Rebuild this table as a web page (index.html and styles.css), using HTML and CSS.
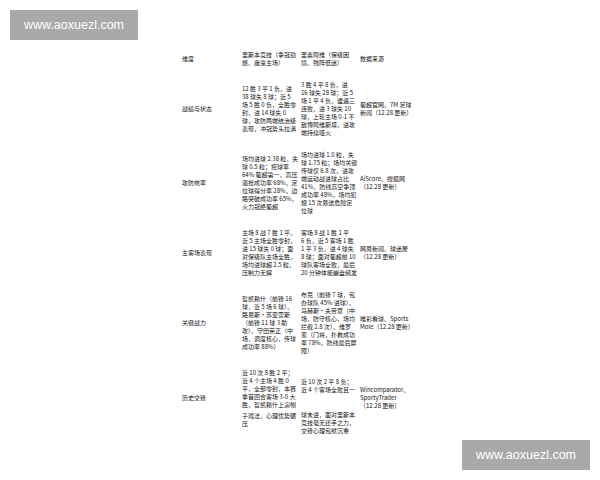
FILE: index.html
```html
<!DOCTYPE html>
<html lang="zh-CN">
<head>
<meta charset="utf-8">
<title>里斯本竞技 vs 里奥阿维</title>
<link rel="stylesheet" href="styles.css">
</head>
<body>
<div class="page">
  <table class="cmp">
    <colgroup>
      <col class="c1"><col class="c2"><col class="c3"><col class="c4">
    </colgroup>
    <tr>
      <td>维度</td>
      <td>里斯本竞技（争冠劲<br>旅、魔鬼主场）</td>
      <td>里奥阿维（保级困<br>境、残阵低迷）</td>
      <td>数据来源</td>
    </tr>
    <tr>
      <td>战绩与状态</td>
      <td>12 胜 3 平 1 负，进<br>38 球失 8 球；近 5<br>场 5 胜 0 负，全胜零<br>封，进 14 球失 0<br>球，攻防两端统治级<br>表现，冲冠势头拉满</td>
      <td>3 胜 4 平 8 负，进<br>16 球失 28 球；近 5<br>场 1 平 4 负，遭遇三<br>连败，进 3 球失 10<br>球，上轮主场 0-1 不<br>敌博阿维斯塔，进攻<br>端持续哑火</td>
      <td>葡超官网、7M 足球<br>新闻（12.28 更新）</td>
    </tr>
    <tr>
      <td>攻防效率</td>
      <td>场均进球 2.38 粒，失<br>球 0.5 粒；控球率<br>64% 葡超第一，高压<br>逼抢成功率 68%，定<br>位球得分率 28%，边<br>路突破成功率 65%，<br>火力冠绝葡超</td>
      <td>场均进球 1.0 粒，失<br>球 1.75 粒；场均关键<br>传球仅 6.8 次，进攻<br>端运动战进球占比<br>41%，防线高空争顶<br>成功率 48%，场均犯<br>规 15 次易送危险定<br>位球</td>
      <td>AiScore、搜狐网<br>（12.28 更新）</td>
    </tr>
    <tr>
      <td>主客场表现</td>
      <td>主场 8 战 7 胜 1 平，<br>近 5 主场全胜零封，<br>进 15 球失 0 球；面<br>对保级队主场全胜，<br>场均进球超 2.5 粒，<br>压制力无解</td>
      <td>客场 8 战 1 胜 1 平<br>6 负，近 5 客场 1 胜<br>1 平 3 负，进 4 球失<br>8 球；面对葡超前 10<br>球队客场全败，最后<br>20 分钟体能崩盘频发</td>
      <td>网易新闻、球迷屋<br>（12.28 更新）</td>
    </tr>
    <tr>
      <td>关键战力</td>
      <td>哲凯赖什（前锋 16<br>球，近 5 场 6 球）、<br>路易斯·苏亚雷斯<br>（前锋 11 球 3 助<br>攻）、守田英正（中<br>场，调度核心，传球<br>成功率 88%）</td>
      <td>布克（前锋 7 球，包<br>办球队 45% 进球）、<br>马赫斯·夫劳意（中<br>场，防守核心，场均<br>拦截 2.8 次）、维罗<br>索（门将，扑救成功<br>率 78%，防线最后屏<br>障）</td>
      <td>唯彩看球、Sports<br>Mole（12.28 更新）</td>
    </tr>
    <tr class="last">
      <td class="lift">历史交锋</td>
      <td class="top"><span class="part">近 10 次 8 胜 2 平；<br>近 4 个主场 4 胜 0<br>平，全部零封，本赛<br>季首回合客场 3-0 大<br>胜，哲凯赖什上演帽</span><span class="part gap-s">子戏法，心理优势碾<br>压</span></td>
      <td class="top"><span class="part drop">近 10 次 2 平 8 负；<br>近 4 个客场全败且一</span><span class="part gap-l">球未进，面对里斯本<br>竞技毫无还手之力，<br>交锋心理包袱沉重</span></td>
      <td class="lift">Wincomparator、<br>SportyTrader<br>（12.28 更新）</td>
    </tr>
  </table>
</div>
<div class="mark mark-tl">www.aoxuezl.com</div>
<div class="mark mark-br">www.aoxuezl.com</div>
</body>
</html>
```

FILE: styles.css
```css
html, body {
  margin: 0;
  padding: 0;
  background: #ffffff;
}

.page {
  width: 600px;
  height: 480px;
  overflow: hidden;
  padding-top: 44px;
  padding-left: 180px;
  box-sizing: border-box;
}

.cmp {
  border-collapse: collapse;
  table-layout: fixed;
  width: 240px;
  font-family: "Noto Sans CJK SC", "Noto Sans", sans-serif;
  font-size: 6px;
  line-height: 8px;
  color: #141414;
}

.c1 { width: 60px; }
.c2 { width: 59px; }
.c3 { width: 59px; }
.c4 { width: 62px; }

.cmp td {
  padding: 7px 2px;
  vertical-align: middle;
  white-space: nowrap;
  overflow: hidden;
}

.cmp td.top {
  vertical-align: top;
}

.cmp td.lift {
  padding-bottom: 16px;
}

.part {
  display: block;
}

.drop {
  margin-top: 9px;
}

.gap-s {
  margin-top: 3px;
}

.gap-l {
  margin-top: 17px;
}

.mark {
  position: absolute;
  width: 128px;
  height: 30px;
  background: #a9a9a9;
  color: #ffffff;
  font-family: "Liberation Sans", Arial, sans-serif;
  font-size: 12.5px;
  line-height: 30px;
  text-align: center;
}

.mark-tl {
  left: 10px;
  top: 10px;
}

.mark-br {
  left: 462px;
  top: 440px;
}
```
